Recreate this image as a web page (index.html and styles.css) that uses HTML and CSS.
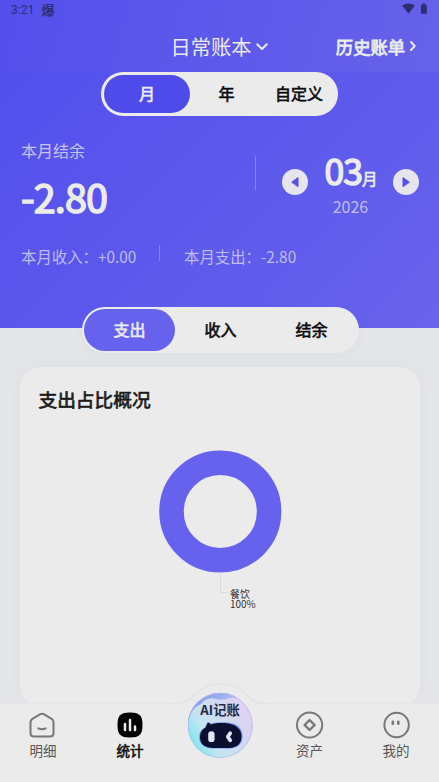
FILE: index.html
```html
<!DOCTYPE html>
<html lang="zh-CN">
<head>
<meta charset="utf-8">
<title>统计</title>
<link rel="stylesheet" href="styles.css">
</head>
<body>
<div class="app">
  <header class="hero">
    <div class="topbar">
      <div class="status">
        <span class="clock">3:21</span><span class="notice">爆</span>
        <svg class="signals" width="26" height="12" viewBox="0 0 26 12"><path d="M0 2.400Q6.500-1.600 13 2.400L6.500 10.800Z"/><path d="M18.900 2h1.400V.6h3V2h1.500v8.800h-5.900z"/></svg>
      </div>
      <div class="titlebar">
        <div class="book">日常账本<svg width="12" height="8" viewBox="0 0 12 8"><path d="M1.200 1.300 6 6l4.800-4.700"/></svg></div>
        <div class="history">历史账单<svg width="6" height="10" viewBox="0 0 6 10"><path d="m1 1 3.700 4L1 9"/></svg></div>
      </div>
    </div>
    <div class="period"><span class="on">月</span><span>年</span><span>自定义</span></div>
    <div class="summary">
      <div class="balance"><div class="label">本月结余</div><div class="amount">-2.80</div></div>
      <div class="month">
        <svg class="arrow" width="26" height="26" viewBox="0 0 26 26"><circle cx="13" cy="13" r="13"/><path d="M10 13 16 8.600v8.800z"/></svg>
        <div class="date"><div class="num">03<small>月</small></div><div class="year">2026</div></div>
        <svg class="arrow" width="26" height="26" viewBox="0 0 26 26"><circle cx="13" cy="13" r="13"/><path d="M16.200 13 10 8.600v8.800z"/></svg>
      </div>
    </div>
    <div class="totals"><span class="income">本月收入：+0.00</span><span>本月支出：-2.80</span></div>
  </header>
  <main>
    <div class="kinds"><span class="on">支出</span><span>收入</span><span>结余</span></div>
    <section class="card">
      <h2>支出占比概况</h2>
      <div class="chart">
        <svg width="124" height="146" viewBox="0 0 124 146"><circle cx="62.300" cy="62.500" r="48.800"/><path d="M62.500 123.500v20H69"/></svg>
        <div class="legend">餐饮<br>100%</div>
      </div>
    </section>
  </main>
  <nav>
    <a class="home"><svg width="28" height="28" viewBox="0 0 28 28"><path d="M12.300 3.200 4.400 7.800Q2.500 9 2.500 11v11q0 3.500 3.500 3.500h16q3.500 0 3.500-3.500V11q0-2-1.900-3.200l-7.900-4.600q-1.700-1-3.400 0z"/><path d="M10.300 17.300q3.700 1.700 7.400 0"/></svg>明细</a>
    <a class="current"><svg width="28" height="28" viewBox="0 0 28 28"><path class="solid" d="M14 1.500c9.500 0 12.500 3 12.500 12.500S23.500 26.500 14 26.500 1.500 23.500 1.500 14 4.500 1.500 14 1.500z"/><path class="bars" d="M9 13v6M14 9v10M19 15.500V19"/></svg>统计</a>
    <div class="ai">
      <svg width="110" height="84" viewBox="0 0 110 84">
        <defs>
          <linearGradient id="orb" x1="0" y1=".8" x2="1" y2=".2"><stop offset="0" stop-color="#72e7ee"/><stop offset=".3" stop-color="#c5e4f1"/><stop offset=".65" stop-color="#d3d8f2"/><stop offset="1" stop-color="#e6cfee"/></linearGradient>
          <linearGradient id="sky" x1="0" y1="0" x2="1" y2=".6"><stop offset="0" stop-color="#656ee0"/><stop offset=".6" stop-color="#8ca8ef"/><stop offset="1" stop-color="#c2b7f0"/></linearGradient>
          <clipPath id="round"><circle cx="55.300" cy="45.500" r="32.800"/></clipPath>
        </defs>
        <path class="bump" d="M8 23.300h5c8 0 12.500-4.400 17-9C38 6.500 45 3.500 55 3.500s18 3 26 10.800c4.500 4.600 9 9 17 9h4V26L88 36H20L8 26z"/>
        <path class="rim" d="M8 23.300h5c8 0 12.500-4.400 17-9C38 6.500 45 3.500 55 3.500s18 3 26 10.800c4.500 4.600 9 9 17 9h4"/>
        <g clip-path="url(#round)">
          <circle cx="55.300" cy="45.500" r="32.800" fill="url(#orb)"/>
          <path d="M20 44V10h46l7 8q-7-1-12 1t-14-1q-8 1-11 6-10 4-13 18z" fill="url(#sky)" opacity=".8"/>
          <circle cx="55.300" cy="45.500" r="32.100" fill="none" stroke="#b4b7f1" stroke-width="1" stroke-opacity=".7"/>
        </g>
        <path d="M40 47.500 42 42.500q2-1 4 1c7-1.600 16-1.600 22 0 6.500 2 9.600 6.500 9.600 12.500 0 9-5.600 12-12.600 12.500H47c-7-.500-13-3.500-13-12 0-4 2-7 6-9z" fill="#7896ef"/>
        <path d="M40.500 47.500 42.700 43q1.300-1 3 1.400c7-1.900 15-1.900 21.300 0 6.500 2 9.500 6.500 9.500 12 0 8-5 11-12 11.500H48c-8-.500-13-3.500-13-11 0-4 1.700-7.200 5.500-9.400z" fill="#0b1030"/>
        <rect x="43.200" y="51.300" width="6.400" height="10.800" rx="3.200" fill="#e4e5f5"/>
        <path d="m65.200 53.200-2.400 3.500 2.400 3.500" fill="none" stroke="#e4e5f5" stroke-width="3.800" stroke-linecap="round" stroke-linejoin="round"/>
      </svg>
      <span>AI记账</span>
    </div>
    <a><svg width="28" height="28" viewBox="0 0 28 28"><circle cx="13.600" cy="14" r="12.600"/><path class="thick" d="m13.600 9 5 5-5 5-5-5z"/></svg>资产</a>
    <a><svg width="28" height="28" viewBox="0 0 28 28"><circle cx="14.600" cy="14" r="12.200"/><path class="eyes" d="M10.800 10.800v2M16.300 10.800v2"/></svg>我的</a>
  </nav>
</div>
</body>
</html>
```
FILE: styles.css
```css
* { box-sizing: border-box; }
body { margin: 0; font-family: "Noto Sans CJK SC", "Noto Sans", sans-serif; }
svg { display: block; flex: none; fill: none; stroke-linecap: round; stroke-linejoin: round; }
.app { width: 439px; height: 782px; display: flex; flex-direction: column; overflow: hidden; background: #e4e6e9; }
.hero { height: 328px; flex: none; background: linear-gradient(135deg, #524eed 5%, #5f5bec 65%, #6963ec); color: #ebebeb; }
.topbar { height: 72px; background: linear-gradient(105deg, #534fec, #6762ea); }
.status { height: 20px; display: flex; align-items: center; padding: 0 11px; color: #302d72; }
.clock { font: 12px/20px Roboto, sans-serif; letter-spacing: .1px; }
.notice { font-size: 13px; font-weight: 700; line-height: 20px; margin-left: 7px; }
.signals { margin-left: auto; fill: #302d72; margin-top: -2px; }
.titlebar { height: 54px; display: grid; grid-template-columns: 1fr auto 1fr; align-items: center; padding: 0 23px; }
.book { grid-column: 2; display: flex; align-items: center; gap: 5px; font-size: 20.200px; line-height: 30px; }
.book svg, .history svg { stroke: #ebebeb; stroke-width: 1.900; }
.history { justify-self: end; display: flex; align-items: center; gap: 5px; font-size: 17.300px; line-height: 26px; -webkit-text-stroke: .8px; }
.history svg { margin-top: -2px; }
.period { width: 237px; height: 44px; margin: 0 0 0 101px; padding: 3px; border-radius: 22px; background: #ebebeb; color: #0b0b0b; display: grid; grid-template-columns: 86px 73px 72px; font-size: 16px; -webkit-text-stroke: .6px; line-height: 37px; text-align: center; }
.period .on { background: #4e4bea; color: #ebebeb; border-radius: 20px; }
.summary { height: 122px; padding: 20px 20px 0 21px; display: flex; }
.balance { width: 234px; height: 90px; }
.label { font-size: 16px; line-height: 26px; color: #c5c2ee; padding-top: 1px; }
.amount { font-size: 39.500px; line-height: 52px; -webkit-text-stroke: 1.500px; letter-spacing: -.9px; margin-top: 7px; }
.month { flex: 1; height: 34px; margin-top: 20px; border-left: 1px solid #8481ee; padding-left: 26px; display: flex; justify-content: space-between; align-items: flex-start; }
.arrow { margin-top: 13px; fill: #e6e5ed; }
.arrow path { fill: #5551e5; stroke: #5551e5; stroke-width: 1; }
.date { text-align: center; margin-top: -11px; }
.num { font-size: 35.500px; line-height: 50px; -webkit-text-stroke: 1.500px; letter-spacing: -1px; white-space: nowrap; }
.num small { font-size: 15.500px; -webkit-text-stroke: .6px; }
.year { font-size: 16px; line-height: 24px; color: #bebbee; margin-top: -9px; }
.totals { display: flex; padding-left: 21px; font-size: 15.400px; line-height: 22px; color: #bebbee; margin-top: 7px; }
.income { width: 139px; margin-right: 24px; background: linear-gradient(#8582ed, #8582ed) right 0 top 0 / 1px 16px no-repeat; white-space: nowrap; }
main { flex: 1; min-height: 0; }
.kinds { position: relative; width: 277px; height: 46px; margin: -21px 0 0 82px; padding: 2px; border-radius: 23px; background: #ebebeb; box-shadow: 0 3px 8px #8f94a014; color: #0b0b0b; display: grid; grid-template-columns: 91px 91px 91px; font-size: 16px; -webkit-text-stroke: .6px; line-height: 41px; text-align: center; }
.kinds .on { background: #6662ed; color: #ebebeb; border-radius: 21px; }
.card { width: 400px; height: 339px; margin: 14px 0 0 20px; border-radius: 20px; background: #ebebeb; box-shadow: 0 0 14px #8f94a014; }
h2 { margin: 0; padding: 16px 18.500px 1px; font-size: 18.700px; line-height: 32px; font-weight: 400; -webkit-text-stroke: .7px; color: #1b1b1b; }
.chart { width: 124px; margin: 33px 0 0 138px; }
.chart circle { stroke: #6662ed; stroke-width: 24.500px; }
.chart path { stroke: #dadada; stroke-width: 1; }
.legend { font-size: 9.900px; line-height: 10px; margin: -6px 0 0 72px; color: #333; }
nav { position: relative; height: 79px; flex: none; background: #ebebeb; border-top: 1px solid #e6e6e7; display: grid; grid-template-columns: 86px 88px 92px 87px 86px; }
nav a { display: flex; flex-direction: column; align-items: center; padding-top: 7px; font-size: 13.500px; line-height: 20px; color: #555; gap: 1px; }
nav a svg { stroke: #777; stroke-width: 2; }
nav .home svg { margin-left: -2px; }
nav .current { color: #111; -webkit-text-stroke: .6px; }
nav .solid { fill: #000; stroke: none; }
nav .bars { stroke: #ebebeb; stroke-width: 2.500px; }
nav .thick { stroke-width: 2.400px; }
nav .eyes { stroke-width: 2.600px; }
.ai { display: flex; justify-content: center; margin-top: -24px; position: relative; }
.bump { fill: #ebebeb; }
.rim { stroke: #e1e1e2; stroke-width: 1.200px; }
.ai span { position: absolute; top: 20px; left: 0; width: 100%; text-align: center; font-size: 13.300px; font-weight: 700; line-height: 20px; color: #252a45; }
```
